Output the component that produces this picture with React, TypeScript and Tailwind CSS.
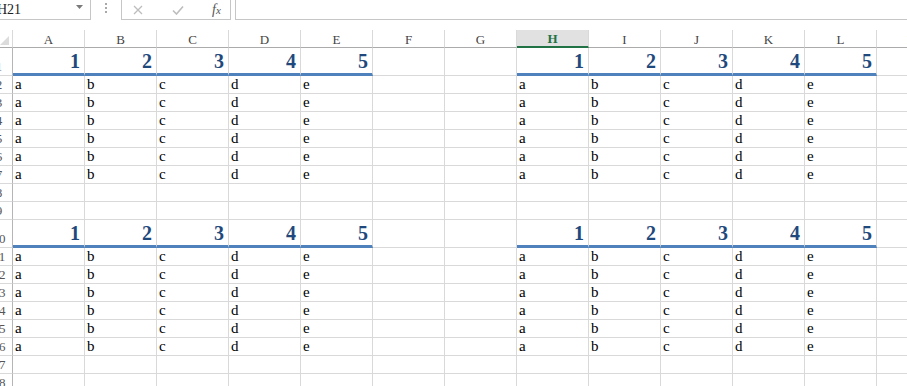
import React from "react";

const COLS = ["A", "B", "C", "D", "E", "F", "G", "H", "I", "J", "K", "L", "M"];
const LETTERS = ["a", "b", "c", "d", "e"];
const SERIF = { fontFamily: '"Liberation Serif", "Times New Roman", serif' };

type RowKind = "head" | "data" | "empty";

function rowKind(r: number): RowKind {
  if (r === 1 || r === 10) return "head";
  if ((r >= 2 && r <= 7) || (r >= 11 && r <= 16)) return "data";
  return "empty";
}

function dataIndex(ci: number): number {
  if (ci <= 4) return ci;
  if (ci >= 7 && ci <= 11) return ci - 7;
  return -1;
}

function RowHeader({ n, h }: { n: number; h: string }) {
  return (
    <div
      className={`w-[13px] shrink-0 overflow-hidden border-r border-b border-r-[#b5b5b5] border-b-[#d9d9d9] flex items-end ${h}`}
    >
      <div
        className="w-[24px] shrink-0 -ml-[13px] text-center text-[13px] leading-[16px] text-[#555]"
        style={SERIF}
      >
        {n}
      </div>
    </div>
  );
}

function Row({ r }: { r: number }) {
  const kind = rowKind(r);
  const h = kind === "head" ? "h-[28px]" : "h-[18px]";
  return (
    <div className="flex">
      <RowHeader n={r} h={h} />
      {COLS.map((c, ci) => {
        const di = dataIndex(ci);
        if (kind === "head" && di >= 0) {
          return (
            <div
              key={c}
              className="w-[72px] h-[28px] shrink-0 border-r border-b-[3px] border-r-[#d9d9d9] border-b-[#4f81bd] flex items-end justify-end pr-[4px] pb-[1px] text-[20px] leading-[22px] font-bold text-[#1f497d]"
              style={SERIF}
            >
              {di + 1}
            </div>
          );
        }
        if (kind === "data" && di >= 0) {
          return (
            <div
              key={c}
              className="w-[72px] h-[18px] shrink-0 border-r border-b border-[#d9d9d9] flex items-end pl-[2px] text-[15px] leading-[17px] text-black"
              style={SERIF}
            >
              {LETTERS[di]}
            </div>
          );
        }
        return (
          <div
            key={c}
            className={`w-[72px] shrink-0 border-r border-b border-[#d9d9d9] ${h}`}
          />
        );
      })}
    </div>
  );
}

export default function App() {
  const rows = Array.from({ length: 18 }, (_, i) => i + 1);
  return (
    <div className="w-[907px] h-[386px] overflow-hidden bg-white">
      {/* formula bar */}
      <div className="flex h-[20px]">
        <div className="w-[91px] shrink-0 border-r border-b border-[#c6c6c6] flex items-start">
          <span
            className="-ml-[3px] mt-[2px] text-[14px] leading-[16px] text-[#222]"
            style={SERIF}
          >
            H21
          </span>
          <div className="flex-1" />
          <svg width="7" height="4" viewBox="0 0 7 4" className="mt-[5px] mr-[7px]">
            <polygon points="0,0 7,0 3.5,4" fill="#7a7a7a" />
          </svg>
        </div>
        <div className="w-[30px] shrink-0 flex flex-col items-center pt-[3px] gap-[2px]">
          <div className="w-[2px] h-[2px] bg-[#a8a8a8]" />
          <div className="w-[2px] h-[2px] bg-[#a8a8a8]" />
          <div className="w-[2px] h-[2px] bg-[#a8a8a8]" />
        </div>
        <div className="w-[110px] shrink-0 border-l border-r border-b border-[#c6c6c6] flex items-center">
          <svg width="10" height="10" viewBox="0 0 10 10" className="ml-[11px]">
            <path d="M1 1 L9 9 M9 1 L1 9" stroke="#bdbdbd" strokeWidth="1.3" fill="none" />
          </svg>
          <svg width="12" height="10" viewBox="0 0 12 10" className="ml-[29px]">
            <path d="M1 5.5 L4.5 9 L11 1.5" stroke="#bdbdbd" strokeWidth="1.6" fill="none" />
          </svg>
          <span
            className="ml-[28px] italic text-[14px] leading-[14px] text-[#555]"
            style={SERIF}
          >
            f<span className="text-[11px]">x</span>
          </span>
        </div>
        <div className="w-[4px] shrink-0" />
        <div className="flex-1 border-l border-b border-[#c6c6c6]" />
      </div>

      <div className="h-[10px]" />

      {/* column headers */}
      <div className="flex h-[18px]">
        <div className="w-[13px] shrink-0 border-r border-b border-r-[#d9d9d9] border-b-[#ababab] flex items-end">
          <svg width="9" height="10" viewBox="0 0 9 10" className="mb-[2px]">
            <polygon points="0,10 9,10 9,1" fill="#dcdcdc" />
          </svg>
        </div>
        {COLS.map((c) =>
          c === "H" ? (
            <div
              key={c}
              className="w-[72px] shrink-0 border-r border-b-2 border-r-[#d9d9d9] border-b-[#217346] bg-[#e1e1e1] flex items-center justify-center pt-[2px] text-[13px] leading-[14px] font-bold text-[#217346]"
              style={SERIF}
            >
              {c}
            </div>
          ) : (
            <div
              key={c}
              className="w-[72px] shrink-0 border-r border-b border-r-[#d9d9d9] border-b-[#ababab] flex items-center justify-center pt-[2px] text-[13px] leading-[14px] text-[#444]"
              style={SERIF}
            >
              {c}
            </div>
          )
        )}
      </div>

      {rows.map((r) => (
        <Row key={r} r={r} />
      ))}
    </div>
  );
}
